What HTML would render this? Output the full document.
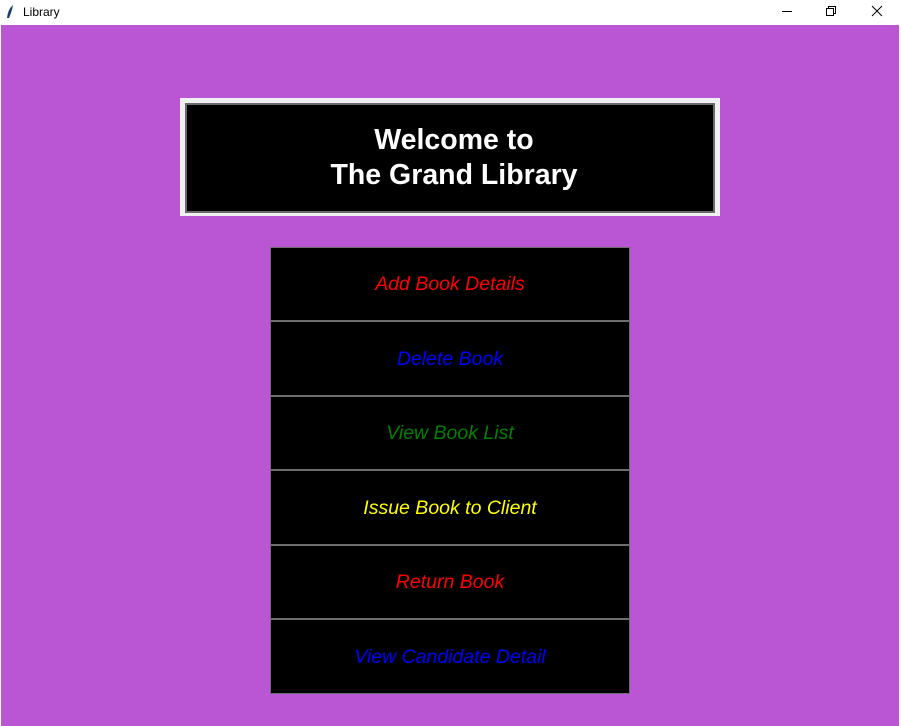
<!DOCTYPE html>
<html><head><style>
html,body{margin:0;padding:0;width:901px;height:726px;overflow:hidden;background:#fff;font-family:"Liberation Sans",sans-serif}
.title{position:absolute;left:0;top:0;width:901px;height:24px;background:#fff;font-size:12px}
.title span{position:absolute;left:23px;top:5px;color:#000}
.main{position:absolute;left:1px;top:25px;width:898px;height:701px;background:#BA55D3}
.hdr{position:absolute;left:180px;top:98px;width:540px;height:118px;background:#f0f0f0}
.hdr .in{position:absolute;left:5px;top:5px;width:526px;height:106px;background:#000;border:2px solid #6a6a6a;color:#fff;font-weight:bold;font-size:28.5px;text-align:center;line-height:35px;box-sizing:content-box}
.btn{position:absolute;left:270px;width:358px;background:#000;border:1px solid #6e6e6e;font-style:italic;font-size:19.5px;text-align:center}
</style></head><body>
<div class="title"><svg style="position:absolute;left:5px;top:4px" width="10" height="16"><path d="M8 1 Q3 5 2 14 L4 14 Q7 7 8 1Z" fill="#1a3d6e"/></svg><span>Library</span>
<svg style="position:absolute;left:780px;top:4px" width="110" height="16"><line x1="2" y1="7.5" x2="12" y2="7.5" stroke="#000"/><rect x="46.5" y="4.5" width="7" height="7" fill="none" stroke="#000"/><path d="M48.5 4.5V2.5H55.5V9.5H53.5" fill="none" stroke="#000"/><path d="M92 2L102 12M102 2L92 12" stroke="#000"/></svg></div>
<div class="main"></div>
<div class="hdr"><div class="in"><div style="padding-top:18px;padding-left:8px">Welcome to<br>The Grand Library</div></div></div>
<div class="btn" style="top:247px;height:72px;line-height:72px;color:#f00">Add Book Details</div>
<div class="btn" style="top:321px;height:73px;line-height:74px;color:#00f">Delete Book</div>
<div class="btn" style="top:396px;height:72px;line-height:72px;color:#008000">View Book List</div>
<div class="btn" style="top:470px;height:73px;line-height:74px;color:#ff0">Issue Book to Client</div>
<div class="btn" style="top:545px;height:72px;line-height:72px;color:#f00">Return Book</div>
<div class="btn" style="top:619px;height:73px;line-height:74px;color:#00f">View Candidate Detail</div>
</body></html>
